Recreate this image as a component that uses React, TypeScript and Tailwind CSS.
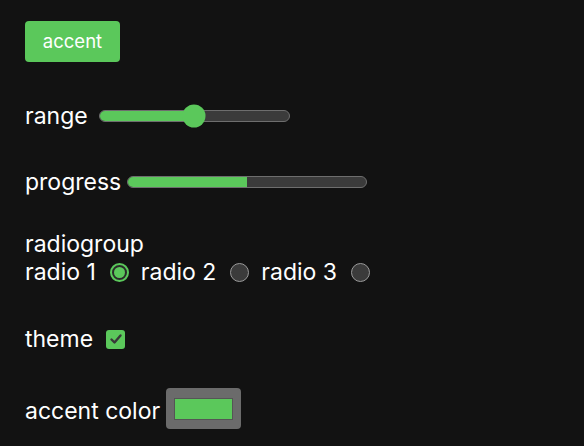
const GREEN = "bg-[#5bc85b]";

function Track({ width, pct, thumb }: { width: number; pct: number; thumb?: boolean }) {
  return (
    <div className="relative flex items-center" style={{ width }}>
      <div className="relative h-[12px] w-full overflow-hidden rounded-full border border-[#6e6e6e] bg-[#3b3b3b]">
        <div className={`h-full ${GREEN}`} style={{ width: `${pct}%` }} />
      </div>
      {thumb && (
        <div
          className={`absolute top-1/2 h-[23px] w-[23px] -translate-x-1/2 -translate-y-1/2 rounded-full ${GREEN}`}
          style={{ left: `${pct}%` }}
        />
      )}
    </div>
  );
}

function Radio({ checked }: { checked?: boolean }) {
  if (checked) {
    return (
      <span className="flex h-[19px] w-[19px] items-center justify-center rounded-full border-2 border-[#5bc85b] bg-[#2a2a2a]">
        <span className="h-[11px] w-[11px] rounded-full bg-[#5bc85b]" />
      </span>
    );
  }
  return <span className="h-[19px] w-[19px] rounded-full border-[1.5px] border-[#9a9a9a] bg-[#3b3b3b]" />;
}

export default function App() {
  return (
    <div
      className="min-h-[446px] w-full bg-[#121212] pl-[25px] pt-[21px] text-[23px] text-white"
      style={{ fontFamily: "Inter, 'Noto Sans', sans-serif" }}
    >
      <button className="h-[41px] w-[95px] rounded-[4px] bg-[#5bc85b] text-[18.5px] text-white">accent</button>

      <div className="mt-[40px] flex h-[28px] items-center gap-[11px]">
        <span className="leading-[28px]">range</span>
        <Track width={191} pct={50} thumb />
      </div>

      <div className="mt-[38px] flex h-[28px] items-center gap-[6px]">
        <span className="leading-[28px]">progress</span>
        <Track width={240} pct={50} />
      </div>

      <div className="mt-[35px] leading-[27px]">radiogroup</div>
      <div className="flex h-[28px] items-center">
        <span className="mr-[14px]">radio 1</span>
        <Radio checked />
        <span className="ml-[12px] mr-[14px]">radio 2</span>
        <Radio />
        <span className="ml-[12px] mr-[14px]">radio 3</span>
        <Radio />
      </div>

      <div className="mt-[39px] flex h-[28px] items-center gap-[13px]">
        <span>theme</span>
        <span className="flex h-[19px] w-[19px] items-center justify-center rounded-[3px] bg-[#5bc85b]">
          <svg width="14" height="14" viewBox="0 0 14 14" fill="none">
            <path d="M2.5 7.5 L5.5 10.5 L11.5 3.5" stroke="#383838" strokeWidth="2.4" strokeLinecap="round" strokeLinejoin="round" />
          </svg>
        </span>
      </div>

      <div className="mt-[35px] flex items-end gap-[6px]">
        <span className="mb-[4px] leading-[28px]">accent color</span>
        <div className="flex h-[41px] w-[75px] items-center justify-center rounded-[4px] bg-[#6b6b6b]">
          <div className="h-[22px] w-[59px] border border-[#555] bg-[#5bc85b]" />
        </div>
      </div>
    </div>
  );
}
